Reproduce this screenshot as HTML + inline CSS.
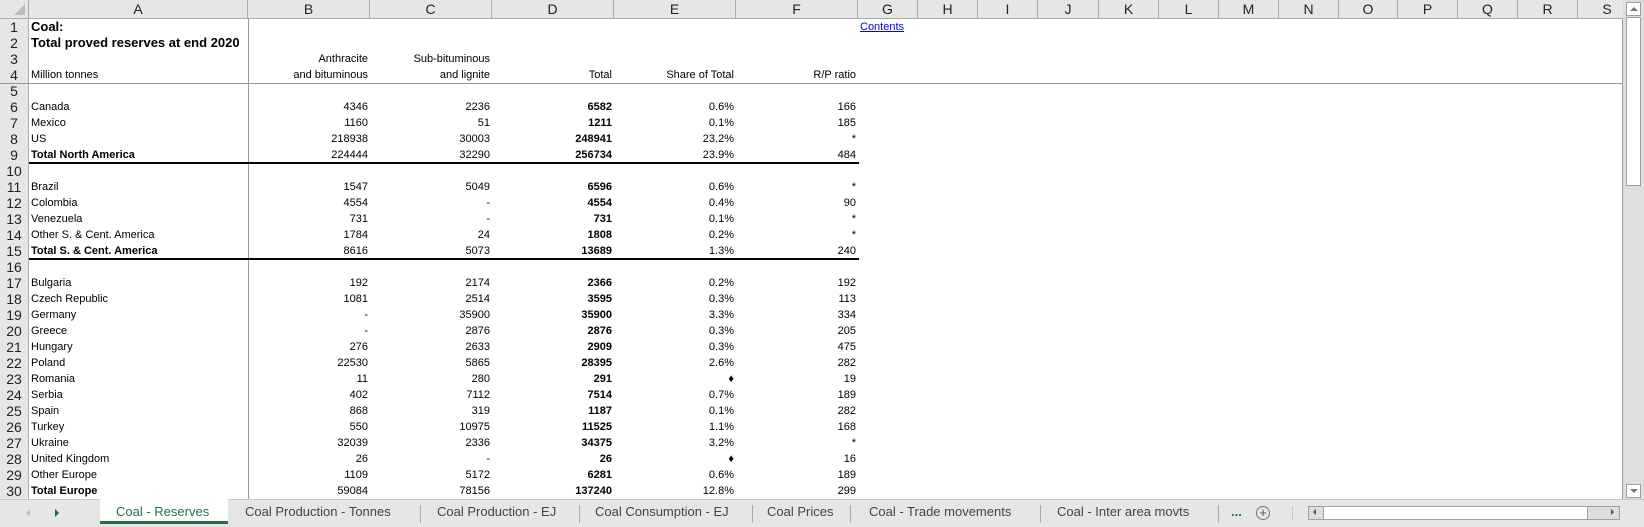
<!DOCTYPE html>
<html><head><meta charset="utf-8"><style>
*{margin:0;padding:0;box-sizing:border-box}
body{width:1644px;height:527px;overflow:hidden;background:#fff;font-family:"Liberation Sans",Arial,sans-serif;position:relative}
.hdr{position:absolute;left:0;top:0;width:1624px;height:19px;background:#e6e6e6;border-bottom:1px solid #ababab}
.hc{position:absolute;top:0;height:18px;line-height:18px;text-align:center;font-size:14px;color:#222;border-right:1px solid #ababab}
.rh{position:absolute;left:0;top:19px;width:29px;height:480px;background:#e6e6e6;border-right:1px solid #ababab}
.rn{position:absolute;left:0;width:28px;height:16px;line-height:16px;text-align:center;font-size:14px;color:#222}
.r{position:absolute;left:0;height:16px;line-height:16px;font-size:11px;color:#000;width:900px}
.r span{position:absolute;top:0;white-space:nowrap}
.a{left:31px}
.b{left:248px;width:120px;text-align:right}
.c{left:370px;width:120px;text-align:right}
.d{left:492px;width:120px;text-align:right;font-weight:bold}
.e{left:614px;width:120px;text-align:right}
.f{left:736px;width:120px;text-align:right}
.t{font-weight:bold}
.tab{position:absolute;top:499px;height:28px;line-height:26px;font-size:13px;color:#444;white-space:nowrap}
.sep{position:absolute;top:505px;width:1px;height:18px;background:#aaa}
</style></head><body>
<div class="hdr">
<div style="position:absolute;left:0;top:0;width:29px;height:18px;border-right:1px solid #ababab"><div style="position:absolute;right:3px;bottom:3px;width:0;height:0;border-left:11px solid transparent;border-bottom:11px solid #bdbdbd"></div></div>
<div class="hc" style="left:29px;width:219px">A</div>
<div class="hc" style="left:248px;width:122px">B</div>
<div class="hc" style="left:370px;width:122px">C</div>
<div class="hc" style="left:492px;width:122px">D</div>
<div class="hc" style="left:614px;width:122px">E</div>
<div class="hc" style="left:736px;width:122px">F</div>
<div class="hc" style="left:858px;width:60px">G</div>
<div class="hc" style="left:918px;width:60px">H</div>
<div class="hc" style="left:978px;width:60px">I</div>
<div class="hc" style="left:1038px;width:61px">J</div>
<div class="hc" style="left:1099px;width:60px">K</div>
<div class="hc" style="left:1159px;width:60px">L</div>
<div class="hc" style="left:1219px;width:60px">M</div>
<div class="hc" style="left:1279px;width:60px">N</div>
<div class="hc" style="left:1339px;width:59px">O</div>
<div class="hc" style="left:1398px;width:60px">P</div>
<div class="hc" style="left:1458px;width:60px">Q</div>
<div class="hc" style="left:1518px;width:60px">R</div>
<div class="hc" style="left:1578px;width:44px;padding-left:14px;border-right:none">S</div>
</div>
<div class="rh">
<div class="rn" style="top:0">1</div><div class="rn" style="top:16px">2</div><div class="rn" style="top:32px">3</div><div class="rn" style="top:48px">4</div><div class="rn" style="top:64px">5</div><div class="rn" style="top:80px">6</div><div class="rn" style="top:96px">7</div><div class="rn" style="top:112px">8</div><div class="rn" style="top:128px">9</div><div class="rn" style="top:144px">10</div><div class="rn" style="top:160px">11</div><div class="rn" style="top:176px">12</div><div class="rn" style="top:192px">13</div><div class="rn" style="top:208px">14</div><div class="rn" style="top:224px">15</div><div class="rn" style="top:240px">16</div><div class="rn" style="top:256px">17</div><div class="rn" style="top:272px">18</div><div class="rn" style="top:288px">19</div><div class="rn" style="top:304px">20</div><div class="rn" style="top:320px">21</div><div class="rn" style="top:336px">22</div><div class="rn" style="top:352px">23</div><div class="rn" style="top:368px">24</div><div class="rn" style="top:384px">25</div><div class="rn" style="top:400px">26</div><div class="rn" style="top:416px">27</div><div class="rn" style="top:432px">28</div><div class="rn" style="top:448px">29</div><div class="rn" style="top:464px">30</div>
</div>
<div style="position:absolute;left:0;top:83px;width:1622px;height:1px;background:#9a9a9a"></div>
<div style="position:absolute;left:248px;top:19px;width:1px;height:480px;background:#9a9a9a"></div>
<div style="position:absolute;left:1622px;top:19px;width:1px;height:480px;background:#9a9a9a"></div>
<div style="position:absolute;left:29px;top:162px;width:830px;height:2px;background:#000"></div>
<div style="position:absolute;left:29px;top:258px;width:830px;height:2px;background:#000"></div>

<div class="r" style="top:19px;font-size:13px"><span class="a t">Coal:</span></div>
<div class="r" style="top:35px;font-size:13px"><span class="a t">Total proved reserves at end 2020</span></div>
<div style="position:absolute;left:860px;top:19px;height:16px;line-height:16px;font-size:11px;color:#00f;text-decoration:underline">Contents</div>
<div class="r" style="top:51px"><span class="b">Anthracite</span><span class="c">Sub-bituminous</span></div>
<div class="r" style="top:67px"><span class="a">Million tonnes</span><span class="b">and bituminous</span><span class="c">and lignite</span><span class="e" style="left:492px">Total</span><span class="e">Share of Total</span><span class="f">R/P ratio</span></div>

<div class="r" style="top:99px"><span class="a">Canada</span><span class="b">4346</span><span class="c">2236</span><span class="d">6582</span><span class="e">0.6%</span><span class="f">166</span></div>
<div class="r" style="top:115px"><span class="a">Mexico</span><span class="b">1160</span><span class="c">51</span><span class="d">1211</span><span class="e">0.1%</span><span class="f">185</span></div>
<div class="r" style="top:131px"><span class="a">US</span><span class="b">218938</span><span class="c">30003</span><span class="d">248941</span><span class="e">23.2%</span><span class="f">*</span></div>
<div class="r" style="top:147px"><span class="a t">Total North America</span><span class="b">224444</span><span class="c">32290</span><span class="d">256734</span><span class="e">23.9%</span><span class="f">484</span></div>

<div class="r" style="top:179px"><span class="a">Brazil</span><span class="b">1547</span><span class="c">5049</span><span class="d">6596</span><span class="e">0.6%</span><span class="f">*</span></div>
<div class="r" style="top:195px"><span class="a">Colombia</span><span class="b">4554</span><span class="c">-</span><span class="d">4554</span><span class="e">0.4%</span><span class="f">90</span></div>
<div class="r" style="top:211px"><span class="a">Venezuela</span><span class="b">731</span><span class="c">-</span><span class="d">731</span><span class="e">0.1%</span><span class="f">*</span></div>
<div class="r" style="top:227px"><span class="a">Other S. &amp; Cent. America</span><span class="b">1784</span><span class="c">24</span><span class="d">1808</span><span class="e">0.2%</span><span class="f">*</span></div>
<div class="r" style="top:243px"><span class="a t">Total S. &amp; Cent. America</span><span class="b">8616</span><span class="c">5073</span><span class="d">13689</span><span class="e">1.3%</span><span class="f">240</span></div>

<div class="r" style="top:275px"><span class="a">Bulgaria</span><span class="b">192</span><span class="c">2174</span><span class="d">2366</span><span class="e">0.2%</span><span class="f">192</span></div>
<div class="r" style="top:291px"><span class="a">Czech Republic</span><span class="b">1081</span><span class="c">2514</span><span class="d">3595</span><span class="e">0.3%</span><span class="f">113</span></div>
<div class="r" style="top:307px"><span class="a">Germany</span><span class="b">-</span><span class="c">35900</span><span class="d">35900</span><span class="e">3.3%</span><span class="f">334</span></div>
<div class="r" style="top:323px"><span class="a">Greece</span><span class="b">-</span><span class="c">2876</span><span class="d">2876</span><span class="e">0.3%</span><span class="f">205</span></div>
<div class="r" style="top:339px"><span class="a">Hungary</span><span class="b">276</span><span class="c">2633</span><span class="d">2909</span><span class="e">0.3%</span><span class="f">475</span></div>
<div class="r" style="top:355px"><span class="a">Poland</span><span class="b">22530</span><span class="c">5865</span><span class="d">28395</span><span class="e">2.6%</span><span class="f">282</span></div>
<div class="r" style="top:371px"><span class="a">Romania</span><span class="b">11</span><span class="c">280</span><span class="d">291</span><span class="e">♦</span><span class="f">19</span></div>
<div class="r" style="top:387px"><span class="a">Serbia</span><span class="b">402</span><span class="c">7112</span><span class="d">7514</span><span class="e">0.7%</span><span class="f">189</span></div>
<div class="r" style="top:403px"><span class="a">Spain</span><span class="b">868</span><span class="c">319</span><span class="d">1187</span><span class="e">0.1%</span><span class="f">282</span></div>
<div class="r" style="top:419px"><span class="a">Turkey</span><span class="b">550</span><span class="c">10975</span><span class="d">11525</span><span class="e">1.1%</span><span class="f">168</span></div>
<div class="r" style="top:435px"><span class="a">Ukraine</span><span class="b">32039</span><span class="c">2336</span><span class="d">34375</span><span class="e">3.2%</span><span class="f">*</span></div>
<div class="r" style="top:451px"><span class="a">United Kingdom</span><span class="b">26</span><span class="c">-</span><span class="d">26</span><span class="e">♦</span><span class="f">16</span></div>
<div class="r" style="top:467px"><span class="a">Other Europe</span><span class="b">1109</span><span class="c">5172</span><span class="d">6281</span><span class="e">0.6%</span><span class="f">189</span></div>
<div class="r" style="top:483px"><span class="a t">Total Europe</span><span class="b">59084</span><span class="c">78156</span><span class="d">137240</span><span class="e">12.8%</span><span class="f">299</span></div>

<div style="position:absolute;left:1623px;top:0;width:21px;height:499px;background:#dedede"></div>
<div style="position:absolute;left:1626px;top:2px;width:15px;height:14px;background:#fff;border:1px solid #a0a0a0"><div style="position:absolute;left:3px;top:4px;border-left:4px solid transparent;border-right:4px solid transparent;border-bottom:4px solid #777"></div></div>
<div style="position:absolute;left:1626px;top:17px;width:15px;height:169px;background:#fff;border:1px solid #a0a0a0"></div>
<div style="position:absolute;left:1626px;top:484px;width:15px;height:14px;background:#fff;border:1px solid #a0a0a0"><div style="position:absolute;left:3px;top:4px;border-left:4px solid transparent;border-right:4px solid transparent;border-top:4px solid #777"></div></div>

<div style="position:absolute;left:0;top:499px;width:1644px;height:28px;background:#e6e6e6;border-top:1px solid #c6c6c6"></div>
<div style="position:absolute;left:26px;top:509px;border-top:4px solid transparent;border-bottom:4px solid transparent;border-right:4px solid #c0c0c0"></div>
<div style="position:absolute;left:55px;top:509px;border-top:4px solid transparent;border-bottom:4px solid transparent;border-left:4px solid #1e6b3a"></div>
<div style="position:absolute;left:100px;top:499px;width:128px;height:25px;background:#fff;border-bottom:3px solid #217346"></div>
<div class="tab" style="left:116px;color:#217346">Coal - Reserves</div>
<div class="tab" style="left:245px">Coal Production - Tonnes</div>
<div class="sep" style="left:420px"></div>
<div class="tab" style="left:437px">Coal Production - EJ</div>
<div class="sep" style="left:579px"></div>
<div class="tab" style="left:595px">Coal Consumption - EJ</div>
<div class="sep" style="left:752px"></div>
<div class="tab" style="left:767px">Coal Prices</div>
<div class="sep" style="left:850px"></div>
<div class="tab" style="left:869px">Coal - Trade movements</div>
<div class="sep" style="left:1040px"></div>
<div class="tab" style="left:1057px">Coal - Inter area movts</div>
<div class="sep" style="left:1218px"></div>
<div class="tab" style="left:1231px;color:#217346;font-weight:bold">...</div>
<div style="position:absolute;left:1256px;top:506px;width:14px;height:14px;border:1px solid #777;border-radius:50%;text-align:center;line-height:11px;font-size:13px;color:#555">+</div>
<div style="position:absolute;left:1292px;top:507px;width:1px;height:12px;border-left:1px dotted #aaa"></div>
<div style="position:absolute;left:1308px;top:506px;width:312px;height:14px;background:#dedede;border:1px solid #a0a0a0"></div>
<div style="position:absolute;left:1323px;top:506px;width:265px;height:14px;background:#fff;border:1px solid #a0a0a0"></div>
<div style="position:absolute;left:1313px;top:509px;border-top:3px solid transparent;border-bottom:3px solid transparent;border-right:3px solid #555"></div>
<div style="position:absolute;left:1611px;top:509px;border-top:3px solid transparent;border-bottom:3px solid transparent;border-left:3px solid #555"></div>
</body></html>
